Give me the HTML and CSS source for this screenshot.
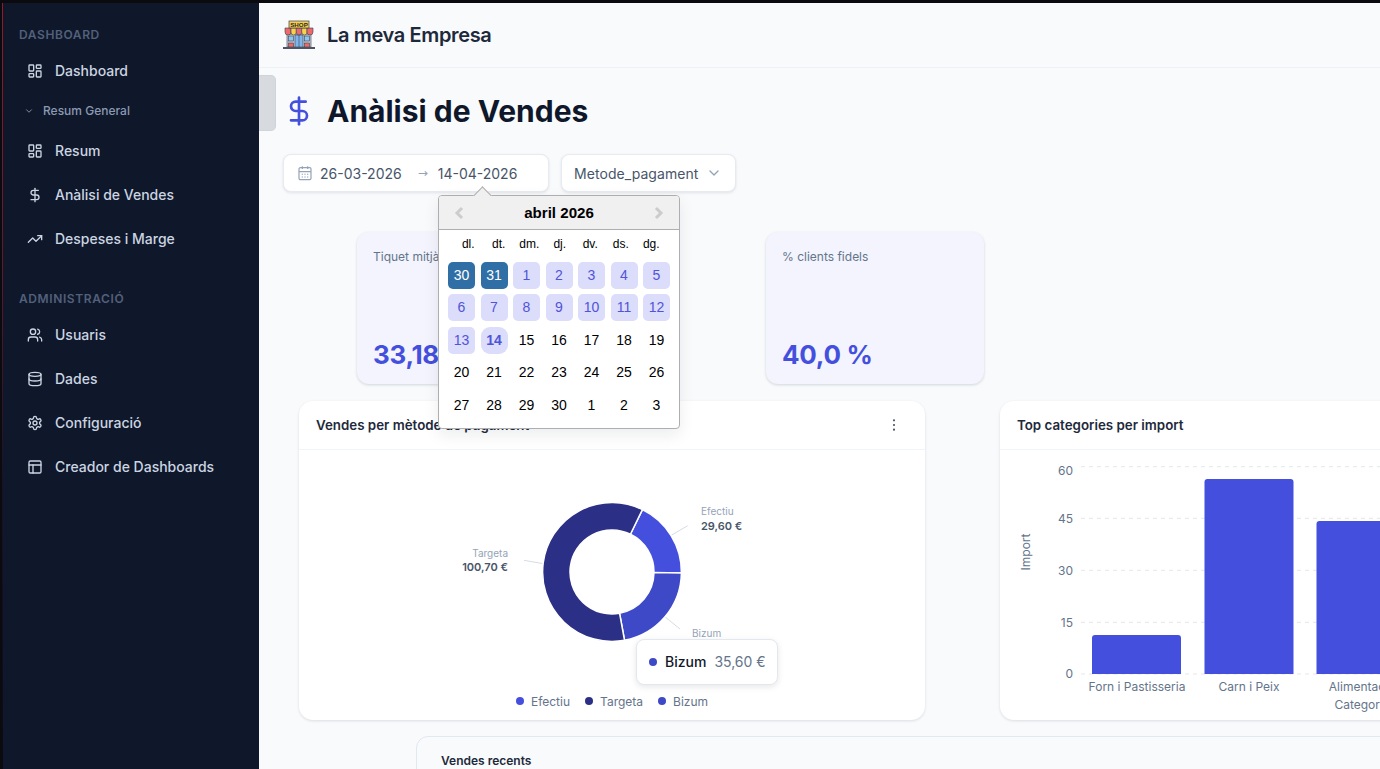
FILE: index.html
```html
<!DOCTYPE html>
<html lang="ca">
<head>
<meta charset="utf-8">
<title>Anàlisi de Vendes</title>
<link rel="stylesheet" href="styles.css">
</head>
<body>
<div class="topline"></div>
<div class="shell">
  <aside class="sidebar">
    <div class="nav-label first">DASHBOARD</div>
    <a class="nav-item"><svg class="ico" viewBox="0 0 24 24"><rect x="3" y="3" width="7" height="9" rx="1"/><rect x="14" y="3" width="7" height="5" rx="1"/><rect x="14" y="12" width="7" height="9" rx="1"/><rect x="3" y="16" width="7" height="5" rx="1"/></svg>Dashboard</a>
    <div class="nav-sub"><svg class="ico-sub" viewBox="0 0 24 24"><path d="m6 9 6 6 6-6"/></svg>Resum General</div>
    <a class="nav-item"><svg class="ico" viewBox="0 0 24 24"><rect x="3" y="3" width="7" height="9" rx="1"/><rect x="14" y="3" width="7" height="5" rx="1"/><rect x="14" y="12" width="7" height="9" rx="1"/><rect x="3" y="16" width="7" height="5" rx="1"/></svg>Resum</a>
    <a class="nav-item"><svg class="ico" viewBox="0 0 24 24"><path d="M12 2v20"/><path d="M17 5H9.5a3.5 3.5 0 0 0 0 7h5a3.5 3.5 0 0 1 0 7H6"/></svg>Anàlisi de Vendes</a>
    <a class="nav-item"><svg class="ico" viewBox="0 0 24 24"><path d="M22 7 13.5 15.5 8.5 10.5 2 17"/><path d="M16 7h6v6"/></svg>Despeses i Marge</a>
    <div class="nav-label">ADMINISTRACIÓ</div>
    <a class="nav-item"><svg class="ico" viewBox="0 0 24 24"><path d="M16 21v-2a4 4 0 0 0-4-4H6a4 4 0 0 0-4 4v2"/><circle cx="9" cy="7" r="4"/><path d="M22 21v-2a4 4 0 0 0-3-3.87"/><path d="M16 3.13a4 4 0 0 1 0 7.75"/></svg>Usuaris</a>
    <a class="nav-item"><svg class="ico" viewBox="0 0 24 24"><ellipse cx="12" cy="5" rx="9" ry="3"/><path d="M3 5V19A9 3 0 0 0 21 19V5"/><path d="M3 12A9 3 0 0 0 21 12"/></svg>Dades</a>
    <a class="nav-item"><svg class="ico" viewBox="0 0 24 24"><path d="M12.22 2h-.44a2 2 0 0 0-2 2v.18a2 2 0 0 1-1 1.73l-.43.25a2 2 0 0 1-2 0l-.15-.08a2 2 0 0 0-2.73.73l-.22.38a2 2 0 0 0 .73 2.73l.15.1a2 2 0 0 1 1 1.72v.51a2 2 0 0 1-1 1.74l-.15.09a2 2 0 0 0-.73 2.73l.22.38a2 2 0 0 0 2.73.73l.15-.08a2 2 0 0 1 2 0l.43.25a2 2 0 0 1 1 1.73V20a2 2 0 0 0 2 2h.44a2 2 0 0 0 2-2v-.18a2 2 0 0 1 1-1.73l.43-.25a2 2 0 0 1 2 0l.15.08a2 2 0 0 0 2.73-.73l.22-.39a2 2 0 0 0-.73-2.73l-.15-.08a2 2 0 0 1-1-1.74v-.5a2 2 0 0 1 1-1.74l.15-.09a2 2 0 0 0 .73-2.73l-.22-.38a2 2 0 0 0-2.73-.73l-.15.08a2 2 0 0 1-2 0l-.43-.25a2 2 0 0 1-1-1.73V4a2 2 0 0 0-2-2z"/><circle cx="12" cy="12" r="3"/></svg>Configuració</a>
    <a class="nav-item"><svg class="ico" viewBox="0 0 24 24"><rect x="3" y="3" width="18" height="18" rx="2"/><path d="M3 9h18"/><path d="M9 21V9"/></svg>Creador de Dashboards</a>
  </aside>

  <main class="main">
    <header class="topbar">
      <svg class="logo" viewBox="0 0 32 32">
        <rect class="l-wall" x="4" y="15" width="24" height="13"/>
        <rect class="l-glass" x="5.5" y="17" width="5" height="5"/>
        <rect class="l-glass" x="21.5" y="17" width="5" height="5"/>
        <rect class="l-red" x="5.5" y="24" width="5" height="4"/>
        <rect class="l-red" x="21.5" y="24" width="5" height="4"/>
        <rect class="l-door" x="12" y="16" width="8" height="12"/>
        <path class="l-line" d="M16 16v12"/>
        <path class="l-red" d="M2 9h6v4a3 3 0 0 1-6 0z"/>
        <path class="l-yellow" d="M8 9h5.300v4a2.650 3 0 0 1-5.300 0z"/>
        <path class="l-red" d="M13.300 9h5.400v4a2.700 3 0 0 1-5.400 0z"/>
        <path class="l-yellow" d="M18.700 9H24v4a2.650 3 0 0 1-5.300 0z"/>
        <path class="l-red" d="M24 9h6v4a3 3 0 0 1-6 0z"/>
        <rect class="l-sign" x="6" y="2" width="20" height="7"/>
        <text class="l-text" x="16" y="7.800">SHOP</text>
        <rect class="l-base" x="0" y="28" width="32" height="2"/>
      </svg>
      <span class="brand">La meva Empresa</span>
    </header>
    <div class="toggle-tab"></div>

    <div class="page-title">
      <svg class="title-ico" viewBox="0 0 24 24"><path d="M12 2v20"/><path d="M17 5H9.500a3.500 3.500 0 0 0 0 7h5a3.500 3.500 0 0 1 0 7H6"/></svg>
      <h1>Anàlisi de Vendes</h1>
    </div>

    <div class="filters">
      <div class="date-box">
        <svg class="cal-ico" viewBox="0 0 24 24"><rect x="3" y="4" width="18" height="18" rx="2"/><path d="M16 2v4M8 2v4M3 10h18"/><path class="cal-dots" d="M7 14h2M11 14h2M15 14h2M7 18h2M11 18h2M15 18h2"/></svg>
        <span class="date-val">26-03-2026</span>
        <span class="date-arrow">→</span>
        <span class="date-val">14-04-2026</span>
      </div>
      <div class="select-box">
        <span class="select-text">Metode_pagament</span>
        <svg class="chev" viewBox="0 0 24 24"><path d="m6 9 6 6 6-6"/></svg>
      </div>

      <div class="picker">
        <div class="picker-tip"></div>
        <div class="picker-head">
          <svg class="nav-arrow" viewBox="0 0 12 14"><path d="M9 2 4 7l5 5"/></svg>
          <span class="picker-month">abril 2026</span>
          <svg class="nav-arrow" viewBox="0 0 12 14"><path d="m3 2 5 5-5 5"/></svg>
        </div>
        <div class="weekdays"><span>dl.</span><span>dt.</span><span>dm.</span><span>dj.</span><span>dv.</span><span>ds.</span><span>dg.</span></div>
        <div class="days">
          <span class="d sel">30</span><span class="d sel">31</span><span class="d rng">1</span><span class="d rng">2</span><span class="d rng">3</span><span class="d rng">4</span><span class="d rng">5</span>
          <span class="d rng">6</span><span class="d rng">7</span><span class="d rng">8</span><span class="d rng">9</span><span class="d rng">10</span><span class="d rng">11</span><span class="d rng">12</span>
          <span class="d rng">13</span><span class="d rng rng-end">14</span><span class="d">15</span><span class="d">16</span><span class="d">17</span><span class="d">18</span><span class="d">19</span>
          <span class="d">20</span><span class="d">21</span><span class="d">22</span><span class="d">23</span><span class="d">24</span><span class="d">25</span><span class="d">26</span>
          <span class="d">27</span><span class="d">28</span><span class="d">29</span><span class="d">30</span><span class="d">1</span><span class="d">2</span><span class="d">3</span>
        </div>
      </div>
    </div>

    <section class="stats">
      <div class="stat"><div class="stat-label">Tiquet mitjà</div><div class="stat-value">33,18 €</div></div>
      <div class="stat"><div class="stat-label">% clients fidels</div><div class="stat-value">40,0 %</div></div>
    </section>

    <section class="charts">
      <article class="card">
        <div class="card-head">
          <span class="card-title">Vendes per mètode de pagament</span>
          <svg class="dots" viewBox="0 0 24 24"><circle cx="12" cy="5" r="1.600"/><circle cx="12" cy="12" r="1.600"/><circle cx="12" cy="19" r="1.600"/></svg>
        </div>
        <svg class="donut" viewBox="0 0 626 240">
          <path class="leader" d="M371.700 85.700 388.700 75.700"/>
          <path class="leader" d="M225 110.300 244.300 113.700"/>
          <path class="leader" d="M365 166 381 179"/>
          <path class="seg s-ef" d="M343.420 59.620A69.400 69.400 0 0 1 382.400 122.970L355 122.590A42 42 0 0 0 331.410 84.250Z"/>
          <path class="seg s-bi" d="M382.400 122.970A69.400 69.400 0 0 1 325.530 190.260L320.580 163.310A42 42 0 0 0 355 122.590Z"/>
          <path class="seg s-ta" d="M325.530 190.260A69.400 69.400 0 1 1 343.420 59.620L331.410 84.250A42 42 0 1 0 320.580 163.310Z"/>
          <text class="pl-name" x="402" y="65">Efectiu</text>
          <text class="pl-val" x="402" y="80">29,60 €</text>
          <text class="pl-name anchor-end" x="209" y="107">Targeta</text>
          <text class="pl-val anchor-end" x="209" y="121">100,70 €</text>
          <text class="pl-name" x="393" y="187">Bizum</text>
        </svg>
        <div class="legend">
          <span class="leg"><i class="dot c-ef"></i>Efectiu</span>
          <span class="leg"><i class="dot c-ta"></i>Targeta</span>
          <span class="leg"><i class="dot c-bi"></i>Bizum</span>
        </div>
        <div class="tooltip"><i class="dot c-bi"></i><span class="tt-name">Bizum</span><span class="tt-val">35,60 €</span></div>
      </article>

      <article class="card">
        <div class="card-head"><span class="card-title">Top categories per import</span></div>
        <svg class="bars" viewBox="0 0 626 269">
          <path class="grid" d="M81 16.700H626M81 68.300H626M81 120.300H626M81 172.300H626M81 224H626"/>
          <path class="bar" d="M92 224V188a3 3 0 0 1 3-3h83a3 3 0 0 1 3 3v36z"/>
          <path class="bar" d="M204.500 224V32a3 3 0 0 1 3-3h83a3 3 0 0 1 3 3v192z"/>
          <path class="bar" d="M316.500 224V74a3 3 0 0 1 3-3h83a3 3 0 0 1 3 3v150z"/>
          <text class="ax y" x="73" y="24.500">60</text>
          <text class="ax y" x="73" y="73">45</text>
          <text class="ax y" x="73" y="125">30</text>
          <text class="ax y" x="73" y="177">15</text>
          <text class="ax y" x="73" y="228">0</text>
          <text class="ax x" x="137" y="241">Forn i Pastisseria</text>
          <text class="ax x" x="249" y="241">Carn i Peix</text>
          <text class="ax x" x="362" y="241">Alimentació</text>
          <text class="ax x" x="362" y="259">Categoria</text>
          <text class="ax x" transform="translate(30 102) rotate(-90)">Import</text>
        </svg>
      </article>
    </section>

    <section class="recent">
      <div class="recent-title">Vendes recents</div>
    </section>
  </main>
</div>
</body>
</html>
```
FILE: styles.css
```css
* { box-sizing: border-box; }
html, body { margin: 0; height: 769px; overflow: hidden; }
body { width: 1380px; font-family: Inter, "Liberation Sans", sans-serif; background: #f8fafc; color: #0f172a; }

.topline { height: 3px; background: #0a0a0f; }
.shell { display: flex; height: 766px; }

/* Sidebar */
.sidebar {
  flex: 0 0 259px;
  background:
    linear-gradient(to bottom, #8f1d2c 0, #5e1a2c 35%, #1a1224 62%, #0a0a14 100%) 2px 0 / 1px 100% no-repeat,
    linear-gradient(#0a0a0f, #0a0a0f) 0 0 / 2px 100% no-repeat,
    #0f172a;
}
.nav-label { height: 16px; line-height: 18px; margin: 29px 0 7px; padding-left: 19px; font-size: 12px; font-weight: 600; letter-spacing: .6px; color: #52607a; }
.nav-label.first { margin-top: 23px; }
.nav-item { display: flex; align-items: center; gap: 12px; height: 44px; padding: 0 0 2px 27px; font-size: 14px; font-weight: 500; color: #cbd5e1; }
.ico { width: 16px; height: 16px; margin-top: 2px; fill: none; stroke: #cbd5e1; stroke-width: 2; stroke-linecap: round; stroke-linejoin: round; flex: none; }
.nav-sub { display: flex; align-items: center; gap: 9px; height: 36px; padding: 0 0 2px 24px; font-size: 12px; font-weight: 500; color: #8a9ab2; }
.ico-sub { width: 10px; height: 10px; margin-top: 2px; fill: none; stroke: #94a3b8; stroke-width: 2; stroke-linecap: round; stroke-linejoin: round; }

/* Main */
.main { flex: 1; min-width: 0; position: relative; overflow: hidden; background: #f8fafc; }
.topbar { display: flex; align-items: center; gap: 12px; height: 65px; padding-left: 24px; border-bottom: 1px solid #eef1f5; background: #f9fafc; }
.logo { width: 32px; height: 32px; flex: none; }
.l-wall { fill: #c9ced6; stroke: #374151; stroke-width: .6; }
.l-glass { fill: #8ec5f0; stroke: #374151; stroke-width: .6; }
.l-red { fill: #ee6a6a; stroke: #374151; stroke-width: .6; }
.l-yellow { fill: #f9d14c; stroke: #374151; stroke-width: .6; }
.l-door { fill: #7fb5ec; stroke: #374151; stroke-width: .6; }
.l-line { stroke: #374151; stroke-width: .6; }
.l-sign { fill: #f9cf4a; stroke: #374151; stroke-width: .7; }
.l-text { font-family: "Liberation Sans", sans-serif; font-size: 6.200px; font-weight: 700; fill: #1f2937; text-anchor: middle; }
.l-base { fill: #4b5563; }
.brand { font-size: 20px; font-weight: 600; letter-spacing: -.36px; color: #1e293b; }
.toggle-tab { position: absolute; left: 0; top: 72px; width: 17px; height: 56px; background: #d7dbe0; border: 1px solid #cfd4da; border-left: 0; border-radius: 0 5px 5px 0; }

.page-title { display: flex; align-items: center; gap: 12px; height: 36px; margin: 25px 0 0 24px; }
.title-ico { width: 32px; height: 32px; fill: none; stroke: #4450dd; stroke-width: 2; stroke-linecap: round; stroke-linejoin: round; flex: none; }
h1 { margin: 0; font-size: 30px; line-height: 36px; font-weight: 700; color: #0f172a; }

/* Filters */
.filters { position: relative; display: flex; gap: 12px; height: 38px; margin: 25px 0 0 24px; z-index: 5; }
.date-box, .select-box { display: flex; align-items: center; height: 38px; background: #fff; border: 1px solid #e7ebf1; border-radius: 8px; box-shadow: 0 1px 3px rgba(15,23,42,.1); font-size: 14px; color: #475569; }
.date-box { width: 266px; padding-left: 13px; }
.cal-ico { width: 16px; height: 16px; fill: none; stroke: #94a3b8; stroke-width: 1.800; margin-right: 7px; flex: none; }
.cal-dots { stroke-width: 1.600; }
.date-arrow { margin: 0 9px 0 16px; width: 11px; font-size: 12px; color: #94a3b8; font-family: "DejaVu Sans", sans-serif; }
.select-box { width: 175px; padding-left: 12px; gap: 8px; }
.select-text { letter-spacing: .06px; }
.chev { width: 16px; height: 16px; fill: none; stroke: #94a3b8; stroke-width: 2; stroke-linecap: round; stroke-linejoin: round; }

/* Date picker */
.picker { position: absolute; left: 155px; top: 41px; width: 242px; height: 234px; background: #fff; border: 1px solid #aeaeae; border-radius: 4px; font-family: "Liberation Sans", Arial, sans-serif; color: #000; box-shadow: 0 6px 16px rgba(15,23,42,.08); }
.picker-tip { position: absolute; left: 37px; top: -7px; width: 13px; height: 13px; background: #f0f0f0; border: 1px solid #aeaeae; border-right: 0; border-bottom: 0; transform: rotate(45deg); }
.picker-head { position: relative; display: flex; align-items: center; justify-content: space-between; height: 34px; padding: 0 14px; background: #f0f0f0; border-bottom: 1px solid #aeaeae; border-radius: 3px 3px 0 0; }
.picker-month { font-size: 15.100px; font-weight: 700; }
.nav-arrow { width: 12px; height: 14px; fill: none; stroke: #ccc; stroke-width: 3; }
.weekdays { display: grid; grid-template-columns: repeat(7, 30.500px); height: 31.800px; padding: 7px 0 0 14px; font-size: 12px; line-height: 14px; text-align: center; }
.days { display: grid; grid-template-columns: repeat(7, 27px); grid-auto-rows: 27px; gap: 5.500px; padding-left: 9px; }
.d { display: flex; align-items: center; justify-content: center; padding-bottom: 1px; font-size: 14px; border-radius: 5px; }
.sel { background: #2f6fa6; color: #fff; }
.rng { background: #dcdcfb; color: #4f55d8; }
.rng-end { border-radius: 9px; font-weight: 700; }

/* Stats */
.stats { display: flex; gap: 191px; margin: 40px 0 0 98px; }
.stat { display: flex; flex-direction: column; justify-content: space-between; width: 218px; height: 152px; padding: 17px 16px 12px; background: #f3f4fd; border-radius: 12px; box-shadow: 0 1px 3px rgba(15,23,42,.16); }
.stat-label { font-size: 12px; line-height: 16px; color: #64748b; }
.stat-value { font-size: 26px; line-height: 34px; font-weight: 700; letter-spacing: -.3px; color: #4450dd; }

/* Charts */
.charts { display: flex; gap: 75px; margin: 17px 0 0 40px; }
.card { position: relative; flex: 0 0 626px; height: 319px; background: #fff; border-radius: 14px; box-shadow: 0 1px 3px rgba(15,23,42,.12); }
.card-head { display: flex; align-items: center; justify-content: space-between; height: 49px; padding: 0 23px 0 17px; border-bottom: 1px solid #f1f5f9; }
.card-title { font-size: 13.330px; font-weight: 600; color: #1e293b; }
.dots { width: 16px; height: 16px; fill: #475569; }
.donut { display: block; width: 626px; height: 240px; }
.bars { display: block; width: 626px; height: 269px; }
.leader { fill: none; stroke: #d6dce6; stroke-width: 1; }
.seg { stroke: #fff; stroke-width: 1.500; }
.s-ef { fill: #4450dd; }
.s-bi { fill: #3d49c6; }
.s-ta { fill: #2b2f85; }
.pl-name { font-size: 10px; fill: #94a3b8; }
.pl-val { font-size: 11px; font-weight: 600; fill: #475569; }
.anchor-end { text-anchor: end; }
.legend { display: flex; justify-content: center; gap: 15px; height: 22px; align-items: center; font-size: 12px; color: #64748b; }
.leg { display: flex; align-items: center; gap: 7px; }
.dot { display: block; width: 8px; height: 8px; border-radius: 50%; flex: none; }
.c-ef { background: #4450dd; }
.c-ta { background: #2b2f85; }
.c-bi { background: #3d49c6; }
.tooltip { position: absolute; left: 337px; top: 238px; display: flex; align-items: center; width: 142px; height: 46px; padding: 0 0 1px 12px; background: #fff; border: 1px solid #e2e8f0; border-radius: 8px; box-shadow: 0 2px 6px rgba(15,23,42,.1); font-size: 14px; }
.tt-name { margin-left: 8px; font-weight: 500; color: #0f172a; }
.tt-val { margin-left: 8px; color: #64748b; }
.grid { fill: none; stroke: #e5e7eb; stroke-width: 1; stroke-dasharray: 4 4; }
.bar { fill: #4450dd; }
.ax { font-size: 12px; fill: #64748b; }
.ax.y { text-anchor: end; }
.ax.x { text-anchor: middle; }

/* Recent */
.recent { width: 1100px; height: 200px; margin: 16px 0 0 157px; padding: 16px 24px; background: #f8fafc; border: 1px solid #e2e8f0; border-radius: 12px; }
.recent-title { font-size: 12px; line-height: 16px; font-weight: 600; color: #1e293b; }
```
